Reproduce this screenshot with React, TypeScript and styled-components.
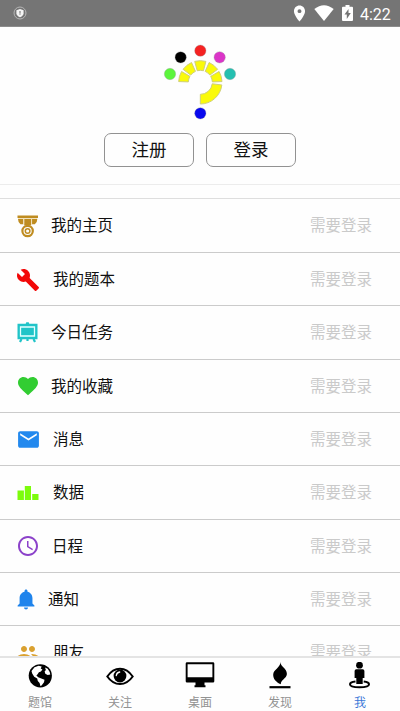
import React from 'react';
import styled, { createGlobalStyle } from 'styled-components';
import { MdBuild, MdFavorite, MdEmail, MdAccessTime, MdPeople, MdLocationOn } from 'react-icons/md';
import { IoMdNotifications } from 'react-icons/io';

const GlobalStyle = createGlobalStyle`
  * { box-sizing: border-box; }
  body { margin: 0; background: #fff; overflow: hidden; }
`;

const Screen = styled.div`
  width: 400px;
  height: 711px;
  display: flex;
  flex-direction: column;
  background: #fefefe;
  color: #111;
  font-family: Roboto, "Noto Sans CJK SC", sans-serif;
  overflow: hidden;
`;

const StatusBar = styled.header`
  flex: none;
  height: 27px;
  padding: 0 9px 0 12px;
  display: flex;
  align-items: center;
  justify-content: space-between;
  background: #757575;
  border-bottom: 1px solid #8c8c8c;
  color: #fff;
`;

const StatusIcons = styled.div`
  display: flex;
  align-items: center;
  svg { display: block; }
`;

const Spacer = styled.span<{ $width: number }>`
  width: ${p => p.$width}px;
`;

const Clock = styled.span`
  width: 31px;
  margin-left: 7px;
  font-size: 16px;
  line-height: 26px;
  font-weight: 400;
  padding-top: 3px;
`;

const Profile = styled.section`
  flex: none;
  height: 158px;
  padding-top: 8px;
  display: flex;
  flex-direction: column;
  align-items: center;
  border-bottom: 1px solid #ececec;
  svg { display: block; }
`;

const Buttons = styled.div`
  display: flex;
  gap: 12px;
  margin-top: 8px;
`;

const Button = styled.button`
  width: 90px;
  height: 34px;
  padding: 1px 0 0;
  border: 1px solid #929292;
  border-radius: 7px;
  background: #fefefe;
  color: #111;
  font: 17.5px/31px Roboto, "Noto Sans CJK SC", sans-serif;
`;

const List = styled.ul`
  flex: 1;
  min-height: 0;
  margin: 13px 0 0;
  padding: 0;
  list-style: none;
  overflow: hidden;
  border-top: 1px solid #dedede;
`;

const Row = styled.li`
  height: 53.35px;
  padding: 1px 28px 0 16px;
  display: flex;
  align-items: center;
  border-bottom: 1px solid #cbcbcb;

  &:first-child { height: 53.9px; }
`;

const IconBox = styled.span<{ $color: string; $width: number }>`
  flex: none;
  width: ${p => p.$width}px;
  color: ${p => p.$color};
  svg { display: block; }
`;

const Label = styled.span`
  flex: 1;
  font-size: 15.5px;
  line-height: 24px;
  padding-top: 1px;
`;

const Hint = styled.span`
  font-size: 15.5px;
  line-height: 24px;
  padding-top: 1px;
  color: #cacaca;
`;

const TabBar = styled.nav`
  flex: none;
  height: 55px;
  display: grid;
  grid-template-columns: repeat(5, 1fr);
  border-top: 2px solid #e4e4e4;
  background: #fefefe;
`;

const Tab = styled.a<{ $active?: boolean }>`
  display: flex;
  flex-direction: column;
  align-items: center;
  padding-top: 4px;
  font-size: 12px;
  line-height: 18px;
  color: ${p => (p.$active ? '#3b78d8' : '#929292')};
  svg { display: block; color: #000; margin-bottom: 4px; }
`;

const CX = 151;
const CY = 142;
const point = (r: number, deg: number) => {
  const a = (deg * Math.PI) / 180;
  return `${(CX + r * Math.cos(a)).toFixed(1)} ${(CY + r * Math.sin(a)).toFixed(1)}`;
};
const segment = (from: number, to: number) =>
  `M${point(65, from)}A65 65 0 0 1 ${point(65, to)}L${point(36, to)}A36 36 0 0 0 ${point(36, from)}Z`;

const segments: [number, number][] = [
  [182, 210], [217, 246], [255, 285], [294, 323], [330, 358], [7, 90],
];
const dots: [number, number, string][] = [
  [151, 47, '#f52222'], [92, 67, '#000'], [209, 67, '#db35c8'],
  [60, 117, '#5cf53c'], [240, 117, '#25bfb0'], [151, 235, '#0808ee'],
];

const Logo = () => (
  <svg width="100" height="90" viewBox="0 0 300 270">
    {segments.map(([a, b]) => (
      <path key={a} d={segment(a, b)} fill="#fafa0a" stroke="#cfcf7a" strokeWidth="3" />
    ))}
    {dots.map(([x, y, c]) => (
      <circle key={c} cx={x} cy={y} r="17" fill={c} stroke="#999" strokeOpacity=".5" strokeWidth="2" />
    ))}
  </svg>
);

const Shield = () => (
  <svg width="16" height="16" viewBox="0 0 16 16">
    <circle cx="8" cy="8" r="6" fill="none" stroke="#b5b5b5" strokeWidth="1" />
    <path d="M8 4l3.6 1.2v3C11.6 10.3 9.6 11.7 8 12.300 6.400 11.700 4.400 10.300 4.400 8.200v-3z" fill="#f4f4f4" />
    <path d="M8 6v4M7 7h2" stroke="#999" strokeWidth="1" />
  </svg>
);

const Wifi = () => (
  <svg width="20" height="16" viewBox="0 0 20 16">
    <path d="M.3 4Q10-3.600 19.700 4L10 16z" fill="#fff" />
  </svg>
);

const Battery = () => (
  <svg width="11" height="16" viewBox="0 0 11 16">
    <path d="M3.500 0h4v1.700H10q1 0 1 1V15q0 1-1 1H1q-1 0-1-1V2.700q0-1 1-1h2.500z" fill="#fff" />
    <path d="M6.500 4L2.500 9.500h2.300V14l4-6H6.500z" fill="#757575" />
  </svg>
);

const Medal = () => (
  <svg width="23" height="24" viewBox="0 0 23 24">
    <path d="M1.500 1.500h20.500v2.600H1.500zM2 4.900h5.300v5.400H4.500Q2 8.500 2 4.900zM16 4.900h5.300q0 3.600-2.500 5.400H16zM8.200 4.900h7v6.500h-7z" fill="currentColor" />
    <path d="M2 4.500h19.300M7.700 4.500v6M15.600 4.500v6" stroke="#efdcae" strokeWidth=".8" />
    <circle cx="11.600" cy="17" r="5.200" fill="#fefefe" stroke="currentColor" strokeWidth="2.200" />
    <circle cx="11.600" cy="17" r="2.300" fill="none" stroke="currentColor" strokeWidth="1.500" />
  </svg>
);

const Board = () => (
  <svg width="23" height="23" viewBox="0 0 23 23">
    <path d="M10.300 1.200h2.400l.6 1.600h8.200v15.400h-20V2.800h8.200z" fill="currentColor" />
    <path d="M4.500 6h14v9h-14z" fill="none" stroke="#e4ffff" strokeWidth="1.300" />
    <path d="M5.500 18l-1.500 3M17.500 18l1.500 3M11.500 18v2" stroke="currentColor" strokeWidth="2.200" />
  </svg>
);

const Bars = () => (
  <svg width="23" height="16" viewBox="0 0 23 16">
    <path d="M1.500 5.500h6.400V15H1.500zM8.800 1h6.200v14H8.800zM16.200 9h6.300v6h-6.300z" fill="currentColor" />
  </svg>
);

const Globe = () => (
  <svg width="28" height="28" viewBox="0 0 28 28">
    <circle cx="14.300" cy="13.800" r="11.600" fill="currentColor" />
    <path d="M8.500 5.300l4.200-1.500 3 .8-1 1.800 1.700 1-1.500 2.200-2 .7-1.300 2-1.200 1.200 1.800 1.800 2.500 1 3.800 1.500-.5 2.500-2.200 3-1.300 1-.9-3.200-1.800-2.200-.6-2.300-3-1.800-2-3.300-.7-2.500z" fill="#fff" />
    <path d="M19 5.500l2.700 1.300 2 3.200.6 2.500-2.600.5-2.400-1.200-.7-2.200 1.300-1.600z" fill="#fff" />
  </svg>
);

const Eye = () => (
  <svg width="28" height="28" viewBox="0 0 28 28">
    <path d="M1.300 14.500C5 9 9 6.700 14 6.700s9 2.300 12.700 7.800C23 19.800 19 22 14 22S5 19.800 1.300 14.500z" fill="#fff" stroke="currentColor" strokeWidth="2" />
    <circle cx="14" cy="14" r="6.400" fill="currentColor" />
    <path d="M10.300 13.500Q10.700 10.500 13.700 10" fill="none" stroke="#fff" strokeWidth="1.300" strokeLinecap="round" />
  </svg>
);

const Desktop = () => (
  <svg width="30" height="28" viewBox="0 0 30 28">
    <path fillRule="evenodd" d="M2 .3h26q1.300 0 1.300 1.300v17.700q0 1.300-1.300 1.300h-8.500v2.600h1v2h-11v-2h1v-2.600H2q-1.300 0-1.300-1.300V1.600Q.7.300 2 .3zM2.600 2.200v13.100h24.800V2.200z" fill="currentColor" />
  </svg>
);

const Flame = () => (
  <svg width="28" height="28" viewBox="0 0 28 28">
    <path d="M14.600 0C14 4.500 21 6 20.900 12 20.700 16.500 14.500 18 14.800 22.300 10 20 7 17 7.200 12.500 7.400 7.500 14 6 14.600 0z" fill="currentColor" />
    <path d="M3.500 25.200h21" stroke="currentColor" strokeWidth="2.200" />
  </svg>
);

const Standing = () => (
  <svg width="28" height="28" viewBox="0 0 28 28">
    <path d="M9.500 19.600C6 20 4 21 4 22.300c0 1.900 4.500 3 9.500 3s9.500-1.100 9.500-3c0-1.300-1.800-2.300-5.300-2.700" fill="none" stroke="currentColor" strokeWidth="2" />
    <circle cx="13.500" cy="3.200" r="3.400" fill="currentColor" />
    <path d="M10.300 7.200h6.400q1.700 0 1.700 1.700v7h-1.700v6h-6.400v-6H8.600v-7q0-1.700 1.700-1.700z" fill="currentColor" />
  </svg>
);

const rows: { label: string; color: string; width: number; icon: React.ReactNode }[] = [
  { label: '我的主页', color: '#bf8c20', width: 35, icon: <Medal /> },
  { label: '我的题本', color: '#f20808', width: 37, icon: <MdBuild size={24} /> },
  { label: '今日任务', color: '#20c4c8', width: 35, icon: <Board /> },
  { label: '我的收藏', color: '#32cd32', width: 35, icon: <MdFavorite size={24} /> },
  { label: '消息', color: '#2389ee', width: 37, icon: <MdEmail size={25} /> },
  { label: '数据', color: '#7cfc0c', width: 37, icon: <Bars /> },
  { label: '日程', color: '#8c42ca', width: 36, icon: <MdAccessTime size={24} /> },
  { label: '通知', color: '#1f84ec', width: 32, icon: <IoMdNotifications size={21} viewBox="46 36 440 440" /> },
  { label: '朋友', color: '#daa130', width: 37, icon: <MdPeople size={24} /> },
];

const tabs: { label: string; icon: React.ReactNode }[] = [
  { label: '题馆', icon: <Globe /> },
  { label: '关注', icon: <Eye /> },
  { label: '桌面', icon: <Desktop /> },
  { label: '发现', icon: <Flame /> },
  { label: '我', icon: <Standing /> },
];

export default function App() {
  return (
    <Screen>
      <GlobalStyle />
      <StatusBar>
        <Shield />
        <StatusIcons>
          <MdLocationOn size={19} />
          <Spacer $width={5} />
          <Wifi />
          <Spacer $width={8} />
          <Battery />
          <Clock>4:22</Clock>
        </StatusIcons>
      </StatusBar>
      <Profile>
        <Logo />
        <Buttons>
          <Button>注册</Button>
          <Button>登录</Button>
        </Buttons>
      </Profile>
      <List>
        {rows.map(r => (
          <Row key={r.label}>
            <IconBox $color={r.color} $width={r.width}>{r.icon}</IconBox>
            <Label>{r.label}</Label>
            <Hint>需要登录</Hint>
          </Row>
        ))}
      </List>
      <TabBar>
        {tabs.map((t, i) => (
          <Tab key={t.label} $active={i === 4}>
            {t.icon}
            {t.label}
          </Tab>
        ))}
      </TabBar>
    </Screen>
  );
}
